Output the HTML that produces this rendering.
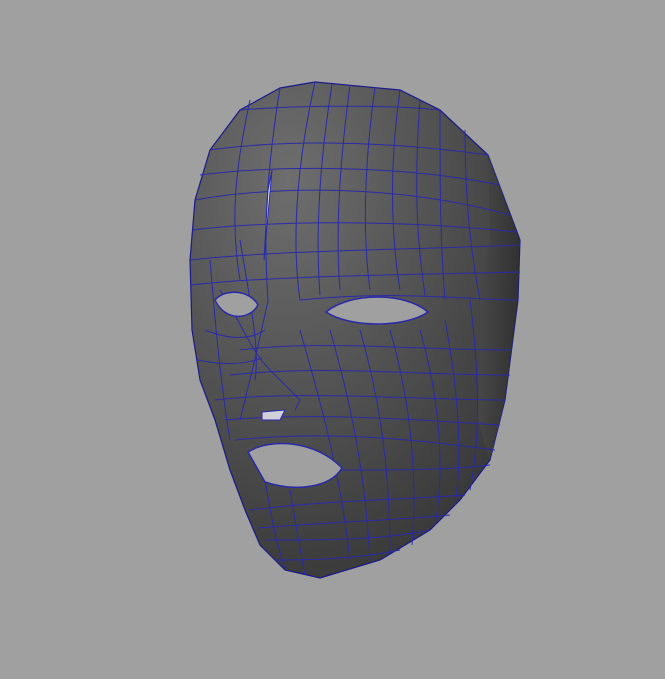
<!DOCTYPE html>
<html><head><meta charset="utf-8"><style>
html,body{margin:0;padding:0;background:#a0a0a0;width:665px;height:679px;overflow:hidden}
</style></head><body>
<svg width="665" height="679" viewBox="0 0 665 679" xmlns="http://www.w3.org/2000/svg">
<defs>
<radialGradient id="g" cx="0.3" cy="0.2" r="0.9">
<stop offset="0" stop-color="#6e6e6e"/>
<stop offset="0.5" stop-color="#525252"/>
<stop offset="1" stop-color="#353535"/>
</radialGradient>
<linearGradient id="side" x1="0" x2="1">
<stop offset="0" stop-color="#4a4a4a"/><stop offset="1" stop-color="#2a2a2a"/>
</linearGradient>
</defs>
<path d="M315,82 L400,90 L440,110 L488,155 L520,240 L518,300 L505,400 L490,460 L460,500 L430,530 L380,560 L320,578 L285,570 L260,545 L245,510 L230,470 L215,420 L200,380 L192,330 L190,260 L195,200 L210,150 L240,110 L280,88 Z" fill="url(#g)" stroke="#1a1a8a" stroke-width="1.2"/>
<path d="M488,155 L520,240 L518,300 L505,400 L490,460 L478,420 L480,300 L490,240 Z" fill="url(#side)" opacity="0.7"/>
<g fill="none" stroke="#2a2aa8" stroke-width="1">
<path d="M280,88 C270,150 262,220 268,300 C260,340 250,380 240,420"/>
<path d="M315,82 C300,150 290,230 300,300"/>
<path d="M350,85 C340,160 335,230 340,290"/>
<path d="M400,90 C390,160 390,230 400,290"/>
<path d="M440,110 C440,180 440,240 445,300"/>
<path d="M250,100 C235,170 230,220 240,280"/>
<path d="M332,84 C320,160 315,230 320,295"/>
<path d="M375,87 C365,160 362,230 370,290"/>
<path d="M420,100 C415,170 415,230 425,295"/>
<path d="M465,130 C465,190 470,250 480,300"/>
<path d="M240,110 C300,105 400,105 440,110"/>
<path d="M210,150 C280,140 380,140 488,155"/>
<path d="M200,175 C280,165 400,165 500,185"/>
<path d="M195,200 C280,185 400,185 510,215"/>
<path d="M192,230 C280,220 400,220 517,232"/>
<path d="M190,260 C280,250 400,250 520,245"/>
<path d="M191,285 C280,275 420,275 520,272"/>
<path d="M300,300 C400,290 470,300 518,300"/>
<path d="M240,350 C320,340 420,350 512,350"/>
<path d="M230,375 C320,365 420,375 510,375"/>
<path d="M215,400 C300,390 420,400 505,400"/>
<path d="M225,420 C320,412 420,420 500,425"/>
<path d="M235,440 C330,430 420,440 495,450"/>
<path d="M340,470 C400,470 450,470 490,465"/>
<path d="M250,510 C330,500 400,500 465,495"/>
<path d="M258,528 C330,522 400,520 450,515"/>
<path d="M265,540 C330,540 380,540 430,530"/>
<path d="M275,560 C320,560 360,558 400,550"/>
<path d="M300,330 C320,400 340,470 350,560"/>
<path d="M330,330 C350,400 365,470 370,560"/>
<path d="M360,330 C380,400 390,470 390,555"/>
<path d="M390,330 C410,400 418,470 412,545"/>
<path d="M420,330 C440,400 445,470 435,525"/>
<path d="M445,320 C460,400 462,460 455,505"/>
<path d="M470,300 C480,380 480,440 470,490"/>
<path d="M290,490 C295,520 300,550 305,575"/>
<path d="M265,480 C270,510 275,540 285,568"/>
<path d="M220,290 C240,320 250,350 270,370 L300,400 L295,410"/>
<path d="M240,240 C250,300 260,350 255,380"/>
<path d="M205,330 C230,340 250,340 265,330"/>
<path d="M198,360 C220,365 245,365 262,358"/>
<path d="M210,260 C215,320 220,380 230,440"/>
</g>
<path d="M215,300 C225,288 250,290 258,305 C250,320 225,322 215,300 Z" fill="#a0a0a0" stroke="#2a2aa8" stroke-width="1.5"/>
<path d="M326,312 C350,292 405,292 428,312 C405,328 350,328 326,312 Z" fill="#a0a0a0" stroke="#2a2aa8" stroke-width="1.5"/>
<path d="M248,452 C270,438 315,440 342,468 C330,488 295,492 265,482 Z" fill="#a0a0a0" stroke="#2a2aa8" stroke-width="1.5"/>
<path d="M262,412 L285,410 L280,420 L262,420 Z" fill="#d0d0d8" stroke="#2a2aa8"/>
<path d="M268,190 L272,170 L264,260 Z" fill="#e0e0ff" stroke="#2a2aa8"/>
</svg>
</body></html>
